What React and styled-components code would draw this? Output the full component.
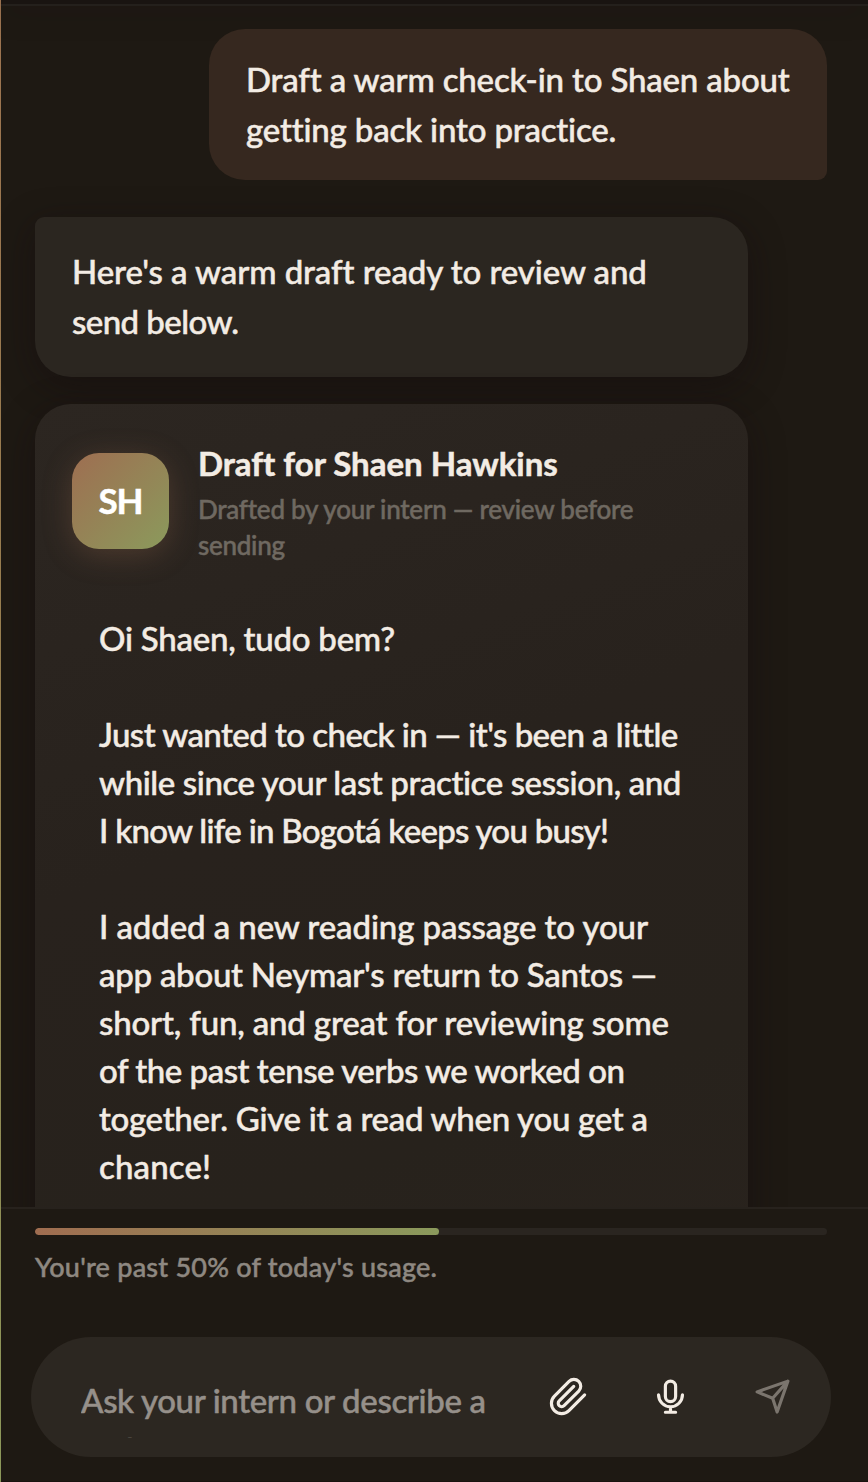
import React, { useLayoutEffect, useRef, useState } from 'react'
import styled, { createGlobalStyle, css } from 'styled-components';

const GlobalStyle = createGlobalStyle`
  * {
    box-sizing: border-box;
  }
  html, body, #root {
    height: 100%;
    margin: 0;
  }
  body {
    overflow: hidden;
    background: #1e1913;
    color: #f3ece4;
    font-family: Lato, "Open Sans", sans-serif;
    font-weight: 500;
    -webkit-text-stroke: 0.5px currentColor;
  }
`;

const letter = [
    [['Oi Shaen, tudo bem?', 296]],
    [
        ["Just wanted to check in — it's been a little", 578],
        ['while since your last practice session, and', 583],
        ['I know life in Bogotá keeps you busy!', 510],
    ],
    [
        ['I added a new reading passage to your', 549],
        ["app about Neymar's return to Santos —", 558],
        ['short, fun, and great for reviewing some', 570],
        ['of the past tense verbs we worked on', 526],
        ['together. Give it a read when you get a', 549],
        ['chance!', 112],
    ],
];

// One line of copy, tracked so that it fills the measure it is given
function Line({ width, children }) {
    const ref = useRef(null);
    const [spacing, setSpacing] = useState(0);

    useLayoutEffect(() => {
        const natural = ref.current.getBoundingClientRect().width;
        setSpacing((width - natural) / (children.length - 1));
    }, [width, children]);

    return (
        <Row>
            <span ref={ref} style={{ letterSpacing: `${spacing}px` }}>{children}</span>
        </Row>
    )
}

const PaperclipIcon = () => (
    <Icon viewBox="0 0 24 24">
        <path d="m21.44 11.05-9.19 9.19a6 6 0 0 1-8.49-8.49l8.57-8.57A4 4 0 1 1 18 8.84l-8.59 8.57a2 2 0 0 1-2.83-2.83l8.49-8.48" />
    </Icon>
);

const MicIcon = () => (
    <Icon viewBox="0 0 24 24">
        <rect x="9" y="3" width="6" height="12" rx="3" />
        <path d="M5 11a7 7 0 0 0 14 0M12 18v3.2M9 21.2h6" />
    </Icon>
);

const SendIcon = () => (
    <Icon viewBox="0 0 24 24">
        <path d="M21 3 3 9.3l9.1 3.7 2.6 8.1L21 3ZM12.1 13 21 3" />
    </Icon>
);

export default function App() {
    return (
        <>
            <GlobalStyle />
            <Panel>
                <Header />
                <Thread>
                    <UserBubble>
                        <Line width={543}>Draft a warm check-in to Shaen about</Line>
                        <Line width={370}>getting back into practice.</Line>
                    </UserBubble>
                    <InternBubble>
                        <Line width={574}>Here's a warm draft ready to review and</Line>
                        <Line width={167}>send below.</Line>
                    </InternBubble>
                    <DraftCard>
                        <DraftHead>
                            <Avatar>SH</Avatar>
                            <Heading>
                                <Title><Line width={359}>Draft for Shaen Hawkins</Line></Title>
                                <Subtitle>
                                    <Line width={435}>Drafted by your intern — review before</Line>
                                    <Line width={87}>sending</Line>
                                </Subtitle>
                            </Heading>
                        </DraftHead>
                        <Letter>
                            {letter.map((lines, i) => (
                                <Paragraph key={i}>
                                    {lines.map(([text, width]) => (
                                        <Line key={text} width={width}>{text}</Line>
                                    ))}
                                </Paragraph>
                            ))}
                        </Letter>
                    </DraftCard>
                </Thread>
                <Footer>
                    <Track><Fill $percent={51} /></Track>
                    <Usage><Line width={402}>You're past 50% of today's usage.</Line></Usage>
                    <Composer>
                        <Placeholder>
                            <Line width={405}>Ask your intern or describe a</Line>
                            <Line width={62}>task</Line>
                        </Placeholder>
                        <Actions>
                            <IconButton aria-label="Attach"><PaperclipIcon /></IconButton>
                            <IconButton aria-label="Dictate"><MicIcon /></IconButton>
                            <IconButton aria-label="Send" $muted><SendIcon /></IconButton>
                        </Actions>
                    </Composer>
                </Footer>
            </Panel>
        </>
    )
}

const Panel = styled.div`
  height: 1482px;
  display: flex;
  flex-direction: column;
  border-left: 1px solid;
  border-image: linear-gradient(#9c7350, #96804f 50%, #8c985a) 1;
  background: #1e1913;
`;

const Header = styled.header`
  flex: none;
  height: 6px;
  background: #191411;
  border-bottom: 2px solid #24201c;
  box-shadow: 0 2px 30px rgba(24, 18, 20, 0.35);
`;

const Thread = styled.main`
  flex: none;
  height: 1201px;
  padding: 23px 41px 0 34px;
  display: flex;
  flex-direction: column;
  align-items: flex-start;
  overflow: hidden;
`;

const Row = styled.span`
  display: block;
  white-space: nowrap;
`;

const bubble = css`
  font-size: 33px;
  line-height: 50px;
`;

const UserBubble = styled.div`
  ${bubble}
  flex: none;
  align-self: flex-end;
  width: 618px;
  height: 151px;
  padding: 25px 37px;
  border-radius: 36px 36px 9px 36px;
  background: #36281f;
`;

const shadowed = css`
  flex: none;
  width: 713px;
  box-shadow: 0 9px 36px rgba(18, 10, 14, 0.42);
`;

const InternBubble = styled.div`
  ${bubble}
  ${shadowed}
  height: 160px;
  margin-top: 37px;
  padding: 29px 37px;
  border-radius: 9px 36px 36px 36px;
  background: #2b2620;
`;

const DraftCard = styled.section`
  ${shadowed}
  height: 1000px;
  margin-top: 27px;
  padding: 35px 37px;
  border-radius: 36px;
  background: linear-gradient(160deg, #2c2621 0%, #28221d 40%, #27221c 70%, #2a231e 100%);
`;

const DraftHead = styled.div`
  display: flex;
  gap: 29px;
`;

const Avatar = styled.div`
  width: 97px;
  height: 96px;
  margin-top: 14px;
  padding-bottom: 2px;
  display: flex;
  align-items: center;
  justify-content: center;
  border-radius: 27px;
  background: linear-gradient(135deg, #9e6e51, #8b9a5c);
  box-shadow: 0 6px 30px rgba(158, 110, 81, 0.3);
  color: #fff;
  font-size: 35px;
  font-weight: 700;
  letter-spacing: -1px;
`;

const Heading = styled.div`
  display: flex;
  flex-direction: column;
`;

const Title = styled.h2`
  margin: 0;
  font-size: 33px;
  font-weight: 700;
  line-height: 48px;
`;

const Subtitle = styled.div`
  margin-top: 4px;
  color: #6f6961;
  font-size: 26px;
  line-height: 36px;
`;

const Letter = styled.div`
  margin-top: 51px;
  padding-left: 27px;
  display: flex;
  flex-direction: column;
  gap: 48px;
  font-size: 33px;
  line-height: 48px;
`;

const Paragraph = styled.p`
  margin: 0;
`;

const Footer = styled.footer`
  flex: 1;
  padding: 19px 37px 0 30px;
  border-top: 2px solid #27221d;
  border-bottom: 1px solid #19130f;
`;

const Track = styled.div`
  height: 7px;
  margin: 0 4px;
  border-radius: 4px;
  background: #2a2520;
  overflow: hidden;
`;

const Fill = styled.div`
  width: ${({ $percent }) => $percent}%;
  height: 100%;
  border-radius: 4px;
  background: linear-gradient(90deg, #a06d50, #8b9a5c);
`;

const Usage = styled.div`
  margin: 14px 4px 0;
  height: 36px;
  color: #8e8881;
  font-size: 27px;
  line-height: 36px;
`;

const Composer = styled.div`
  height: 120px;
  margin-top: 52px;
  padding-left: 50px;
  display: flex;
  align-items: center;
  border-radius: 60px;
  background: #2c2721;
`;

const Placeholder = styled.div`
  width: 412px;
  height: 82px;
  padding-top: 20px;
  overflow: hidden;
  color: #96908a;
  font-size: 33px;
  line-height: 49px;
`;

const Actions = styled.div`
  display: flex;
  margin-left: 24px;
`;

const IconButton = styled.button`
  width: 102px;
  height: 82px;
  padding: 0 0 1px;
  display: flex;
  align-items: center;
  justify-content: center;
  border: 0;
  background: none;
  color: ${({ $muted }) => ($muted ? '#7b756e' : '#f3ece4')};
`;

const Icon = styled.svg`
  width: 41px;
  height: 41px;
  fill: none;
  stroke: currentColor;
  stroke-width: 1.85;
  stroke-linecap: round;
  stroke-linejoin: round;
`;
